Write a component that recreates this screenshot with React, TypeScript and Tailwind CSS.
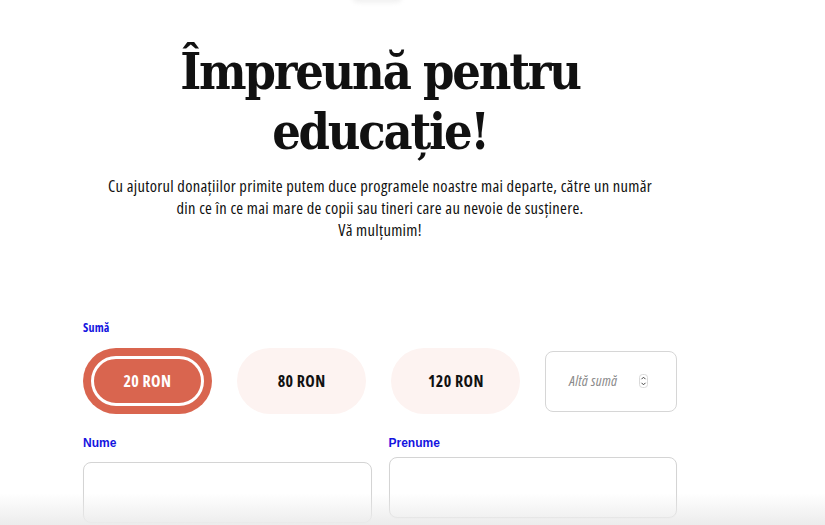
import React from "react";

const serif = { fontFamily: '"DejaVu Serif Condensed", "DejaVu Serif", serif' };

function Spinner() {
  return (
    <svg width="9" height="14" viewBox="0 0 9 14" className="block">
      <rect x="0.5" y="0.5" width="8" height="13" rx="3" fill="#fff" stroke="#d0d0d0" strokeWidth="0.8" />
      <path d="M2.5 5.2 L4.5 3.2 L6.5 5.2" fill="none" stroke="#444" strokeWidth="1" />
      <path d="M2.5 8.8 L4.5 10.8 L6.5 8.8" fill="none" stroke="#444" strokeWidth="1" />
    </svg>
  );
}

export default function App() {
  return (
    <div className="relative w-full h-[525px] overflow-hidden bg-white text-[#111]">
      <div className="absolute left-[352px] top-[-9px] w-[50px] h-[12px] rounded-full bg-[#f2f2f2] blur-[2px]" />
      <div className="ml-[83px] w-[594px] flex flex-col">
        <h1
          className="mt-[42px] text-center text-[50px] leading-[60px] font-bold tracking-[-2.2px] text-[#111]"
          style={serif}
        >
          Împreună pentru
          <br />
          educație!
        </h1>
        <p className="mt-[13px] -mx-[10px] text-center text-[16.5px] leading-[22px] tracking-[0.3px] [font-family:'Open_Sans','Liberation_Sans_Narrow',sans-serif] [font-stretch:75%] text-[#111]">
          Cu ajutorul donațiilor primite putem duce programele noastre mai departe, către un număr
          <br />
          din ce în ce mai mare de copii sau tineri care au nevoie de susținere.
          <br />
          Vă mulțumim!
        </p>

        <div className="mt-[80px] text-[12px] leading-[14px] font-bold tracking-[0.2px] text-[#1515e0] [font-family:'Open_Sans',sans-serif] [font-stretch:75%]">
          Sumă
        </div>
        <div className="mt-[13px] flex items-center gap-[25px] [font-family:'Open_Sans',sans-serif] [font-stretch:75%]">
          <button className="w-[129px] h-[66px] rounded-full bg-[#d9654f] p-[8px] flex">
            <span className="flex-1 rounded-full border-[3px] border-white flex items-center justify-center text-white font-bold text-[16px] tracking-[0.4px]">
              20 RON
            </span>
          </button>
          <button className="w-[130px] h-[66px] rounded-full bg-[#fdf3f1] flex items-center justify-center font-bold text-[16px] tracking-[0.4px] text-[#111]">
            80 RON
          </button>
          <button className="w-[129px] h-[66px] rounded-full bg-[#fdf3f1] flex items-center justify-center font-bold text-[16px] tracking-[0.4px] text-[#111]">
            120 RON
          </button>
          <div className="w-[132px] h-[61px] rounded-[8px] border border-[#d6d6d6] flex items-center pl-[23px] pr-[28px] justify-between">
            <span className="italic text-[14.5px] tracking-[0.3px] text-[#8a8a8a]">Altă sumă</span>
            <Spinner />
          </div>
        </div>

        <div className="mt-[22px] grid grid-cols-2 gap-[17px] [font-family:'Liberation_Sans_Narrow','Liberation_Sans',sans-serif]">
          <div className="flex flex-col">
            <div className="text-[12px] leading-[14px] font-bold text-[#1515e0]">Nume</div>
            <div className="mt-[12px] h-[61px] rounded-[8px] border border-[#d4d4d4] shadow-[0_1px_1px_rgba(0,0,0,0.05)] bg-white" />
          </div>
          <div className="flex flex-col">
            <div className="text-[12px] leading-[14px] font-bold text-[#1515e0]">Prenume</div>
            <div className="mt-[7px] h-[61px] rounded-[8px] border border-[#d4d4d4] shadow-[0_1px_1px_rgba(0,0,0,0.05)] bg-white" />
          </div>
        </div>
      </div>
      <div className="pointer-events-none absolute inset-x-0 bottom-0 h-[32px] bg-gradient-to-b from-[rgba(236,236,236,0)] to-[#ececec]" />
    </div>
  );
}
